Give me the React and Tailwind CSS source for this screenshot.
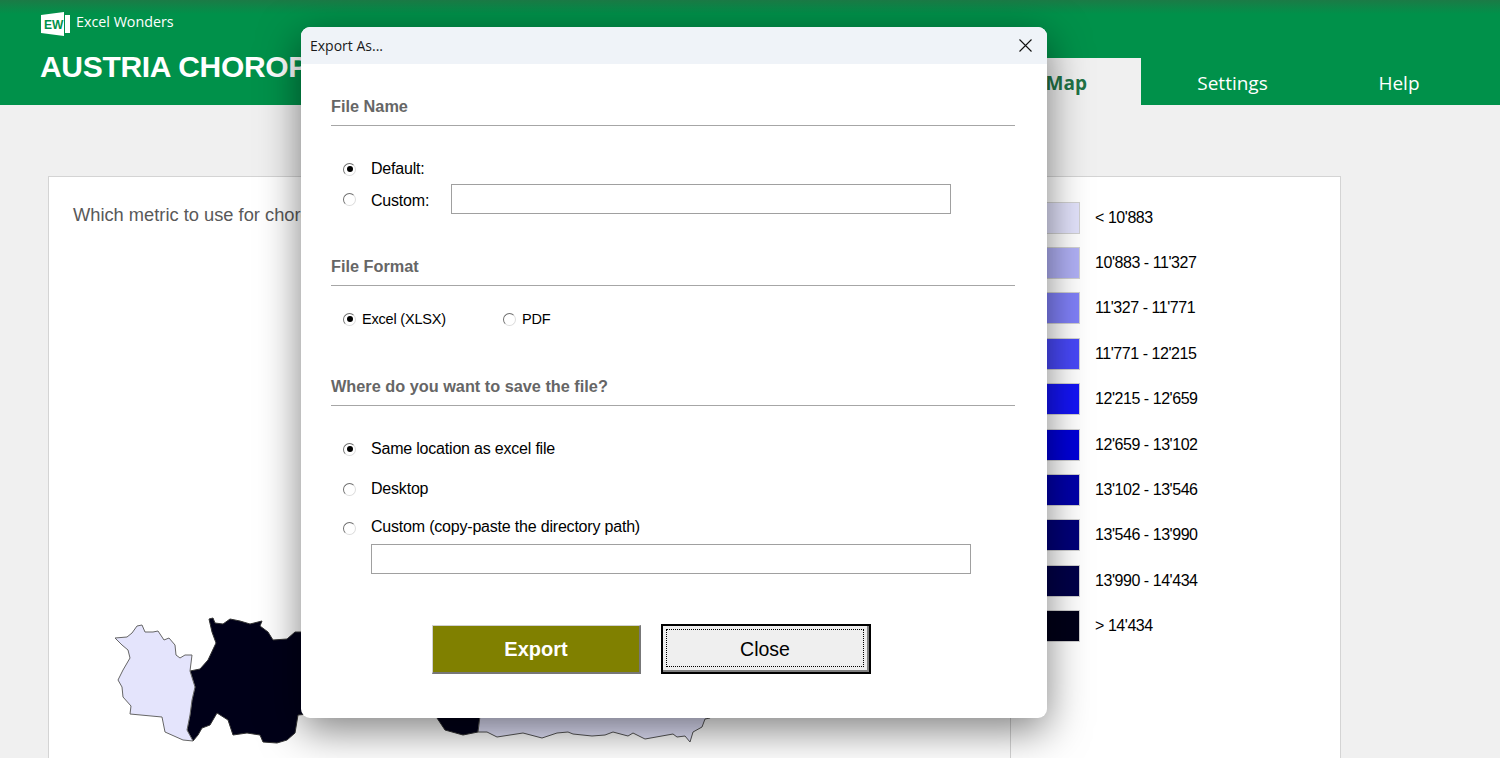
const LEGEND = [
  { color: 'bg-[#e2e2fb]', label: "< 10'883" },
  { color: 'bg-[#b0b0f5]', label: "10'883 - 11'327" },
  { color: 'bg-[#8080f8]', label: "11'327 - 11'771" },
  { color: 'bg-[#4848f8]', label: "11'771 - 12'215" },
  { color: 'bg-[#1414f5]', label: "12'215 - 12'659" },
  { color: 'bg-[#0000d8]', label: "12'659 - 13'102" },
  { color: 'bg-[#0000a8]', label: "13'102 - 13'546" },
  { color: 'bg-[#000078]', label: "13'546 - 13'990" },
  { color: 'bg-[#000048]', label: "13'990 - 14'434" },
  { color: 'bg-[#000018]', label: "> 14'434" },
];

function Logo() {
  return (
    <svg width="30" height="24" viewBox="0 0 30 24" className="block">
      <polygon points="0,3 23,0 23,24 0,21" fill="#fff" />
      <rect x="24" y="3" width="5" height="18" fill="#fff" />
      <text x="3" y="16.5" fontFamily="Liberation Sans, sans-serif" fontWeight="700" fontSize="12" fill="#00914a">EW</text>
    </svg>
  );
}

function MapShapes() {
  return (
    <svg width="640" height="158" viewBox="100 600 640 158" className="block">
      <polygon
        fill="#000018"
        stroke="#333"
        strokeWidth="1"
        strokeLinejoin="round"
        points="209,619 213,618 215,623 223,624 230,619 240,621 250,624 262,621 260,626 268,632 273,640 287,639 295,632 300,632 320,632 320,713 298,715 295,733 287,740 277,743 263,742 260,735 247,733 233,735 228,720 217,713 210,725 202,728 198,735 193,741 187,730 190,715 192,700 195,687 190,671 200,669 208,660 216,643 212,632"
      />
      <polygon
        fill="#e4e4fc"
        stroke="#666"
        strokeWidth="1"
        strokeLinejoin="round"
        points="115,638 127,637 132,633 137,626 142,625 145,632 153,632 158,631 164,640 169,638 175,645 176,655 180,658 185,655 192,655 190,671 195,687 192,700 190,715 187,730 193,741 183,740 165,732 162,717 130,714 131,706 123,697 122,687 118,680 123,670 130,658 128,650 122,645"
      />
      <polygon
        fill="#000018"
        stroke="#333"
        strokeWidth="1"
        strokeLinejoin="round"
        points="430,700 482,700 478,732 463,735 445,730 437,718"
      />
      <polygon
        fill="#e4e4fc"
        stroke="#555"
        strokeWidth="1"
        strokeLinejoin="round"
        points="482,700 730,700 710,718 705,719 702,727 693,732 690,742 685,736 677,737 673,734 645,739 633,733 628,736 613,732 605,735 592,736 573,734 568,732 557,733 542,738 523,733 497,737 487,732 478,732"
      />
    </svg>
  );
}

function Radio({ checked, className = '' }) {
  return (
    <span className={`flex h-[13px] w-[13px] shrink-0 items-center justify-center rounded-full border border-t-[#6f6f6f] border-l-[#6f6f6f] border-r-[#dcdcdc] border-b-[#dcdcdc] bg-white ${className}`}>
      {checked && <span className="h-[6px] w-[6px] rounded-full bg-black" />}
    </span>
  );
}

function SectionHeading({ children, className = '' }) {
  return (
    <div className={`border-b border-[#a6a6a6] pb-[9px] text-[16.3px] leading-[20px] font-bold tracking-normal text-[#666666] ${className}`}>
      {children}
    </div>
  );
}

function ExportDialog() {
  return (
    <div className="absolute top-[27px] left-[301px] h-[691px] w-[746px] overflow-hidden rounded-[9px] bg-white font-['Liberation_Sans',sans-serif] text-black shadow-[0_12px_42px_rgba(0,0,0,0.5)]">
      <div className="flex h-[37px] items-center justify-between bg-[#eff3f8] pr-[15px] pl-[9px]">
        <span className="font-['Open_Sans',sans-serif] text-[14px] text-[#1a1a1a]">Export As...</span>
        <svg width="13" height="13" viewBox="0 0 13 13" stroke="#111" strokeWidth="1.1" fill="none">
          <path d="M0.5 0.5 L12.5 12.5 M12.5 0.5 L0.5 12.5" />
        </svg>
      </div>

      <div className="pt-[32px] pr-[32px] pl-[30px] text-[16px] leading-[20px] tracking-[-0.2px]">
        <SectionHeading>File Name</SectionHeading>
        <div className="mt-[33px] flex h-[20px] items-center">
          <Radio checked className="ml-[12px]" />
          <span className="ml-[15px]">Default:</span>
        </div>
        <div className="mt-[5px] flex h-[30px] items-center">
          <Radio className="ml-[12px]" />
          <span className="ml-[15px] w-[80px] pt-[4px]">Custom:</span>
          <div className="h-[30px] w-[500px] border border-[#a0a0a0]" />
        </div>

        <SectionHeading className="mt-[42px]">File Format</SectionHeading>
        <div className="mt-[23px] flex h-[20px] items-center text-[14.5px]">
          <Radio checked className="ml-[12px]" />
          <span className="ml-[6px] w-[141px]">Excel (XLSX)</span>
          <Radio />
          <span className="ml-[6px]">PDF</span>
        </div>

        <SectionHeading className="mt-[47px]">Where do you want to save the file?</SectionHeading>
        <div className="mt-[33px] flex h-[20px] items-center">
          <Radio checked className="ml-[12px]" />
          <span className="ml-[15px]">Same location as excel file</span>
        </div>
        <div className="mt-[20px] flex h-[20px] items-center">
          <Radio className="ml-[12px]" />
          <span className="ml-[15px]">Desktop</span>
        </div>
        <div className="mt-[18px] flex h-[20px] items-center">
          <Radio className="ml-[12px] translate-y-[1px]" />
          <span className="ml-[15px]">Custom (copy-paste the directory path)</span>
        </div>
        <div className="mt-[7px] ml-[40px] h-[30px] w-[600px] border border-[#a0a0a0]" />

        <div className="mt-[50px] ml-[101px] flex items-start tracking-normal">
          <button className="mt-[1px] flex h-[49px] w-[209px] items-center justify-center border-2 border-t-[1px] border-l-[1px] border-t-[#d0d0d0] border-l-[#d0d0d0] border-r-[#777777] border-b-[#777777] bg-[#808000] text-[20px] font-bold text-white">
            Export
          </button>
          <button className="ml-[20px] h-[50px] w-[210px] border-2 border-black">
            <span className="block h-full w-full border-r-2 border-b-2 border-[#808080] bg-[#efefef] p-[3px]">
              <span className="flex h-full w-full items-center justify-center border border-dotted border-black pt-[1px] text-[19.5px]">
                Close
              </span>
            </span>
          </button>
        </div>
      </div>
    </div>
  );
}

export default function App() {
  return (
    <div className="relative h-[758px] overflow-hidden bg-[#f0f0f0]">
      {/* Header */}
      <header className="flex h-[105px] justify-between bg-[linear-gradient(#1b7b46,#00914a_14px)] pr-[26px] pl-[40px]">
        <div>
          <div className="flex items-start gap-[5px] pt-[12px] pl-[1px]">
            <Logo />
            <span className="font-['Open_Sans',sans-serif] text-[14.3px] leading-[20px] text-white">Excel Wonders</span>
          </div>
          <h1 className="mt-[12px] font-['Liberation_Sans',sans-serif] text-[30px] leading-[38px] font-bold tracking-[-0.3px] whitespace-nowrap text-white">
            AUSTRIA CHOROPLETH MAP
          </h1>
        </div>
        <nav className="flex items-end font-['Open_Sans',sans-serif] text-[19px] text-white">
          <div className="flex h-[47px] w-[168px] items-center justify-end bg-[#f0f0f0] pt-[4px] pr-[54px] font-bold text-[#217346]">Map</div>
          <div className="flex h-[47px] w-[183px] items-center justify-center pt-[4px]">Settings</div>
          <div className="flex h-[47px] w-[150px] items-center justify-center pt-[4px]">Help</div>
        </nav>
      </header>

      {/* Main card */}
      <main className="mt-[71px] ml-[48px] flex h-[700px] w-[1293px] border border-[#d4d4d4] bg-white font-['Liberation_Sans',sans-serif]">
        <section className="w-[962px] border-r border-[#d4d4d4]">
          <p className="mt-[28px] ml-[24px] text-[18.3px] leading-[20px] text-[#595959]">
            Which metric to use for choropleth map?
          </p>
          <div className="mt-[375px] ml-[51px]">
            <MapShapes />
          </div>
        </section>
        <aside className="pt-[18px]">
          {LEGEND.map((item) => (
            <div key={item.label} className="flex h-[45.4px] items-center">
              <div className={`ml-[20px] h-[32px] w-[49px] border border-[#d0d0d0] ${item.color}`} />
              <span className="ml-[15px] text-[16px] tracking-[-0.45px] text-black">{item.label}</span>
            </div>
          ))}
        </aside>
      </main>

      <ExportDialog />
    </div>
  );
}
